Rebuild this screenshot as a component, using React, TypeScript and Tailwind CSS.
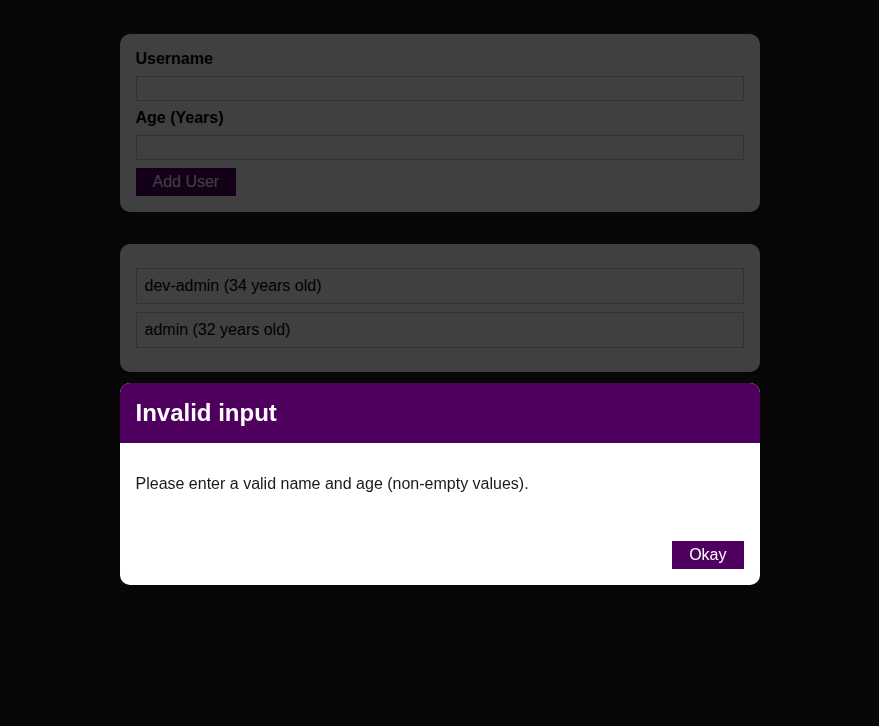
import { useState } from "react";

type User = { id: string; name: string; age: number };

function Card({ children }: { children: React.ReactNode }) {
  return (
    <div className="rounded-[10px] bg-white shadow-[0_2px_8px_rgba(0,0,0,0.26)]">
      {children}
    </div>
  );
}

function ErrorModal({ title, message, onConfirm }: { title: string; message: string; onConfirm: () => void }) {
  return (
    <>
      <div className="fixed inset-0 z-10 bg-black/75" onClick={onConfirm} />
      <div className="absolute left-1/2 top-[383px] z-20 w-[640px] -translate-x-1/2 overflow-hidden rounded-[10px] bg-white">
        <header className="bg-[#4f005f] p-4">
          <h2 className="m-0 text-2xl font-bold leading-[normal] text-white">{title}</h2>
        </header>
        <div className="p-4">
          <p className="my-4 leading-[normal] text-[#1a1a1a]">{message}</p>
        </div>
        <footer className="flex justify-end p-4">
          <button
            onClick={onConfirm}
            className="border border-[#4f005f] bg-[#4f005f] px-4 py-1 leading-[normal] text-white"
          >
            Okay
          </button>
        </footer>
      </div>
    </>
  );
}

export default function App() {
  const [users] = useState<User[]>([
    { id: "u1", name: "dev-admin", age: 34 },
    { id: "u2", name: "admin", age: 32 },
  ]);
  const [error, setError] = useState<{ title: string; message: string } | null>({
    title: "Invalid input",
    message: "Please enter a valid name and age (non-empty values).",
  });

  return (
    <div className="relative min-h-screen bg-[#1f1f1f] pt-[34px] font-['Liberation_Sans',Arial,sans-serif] text-base leading-[normal]">
      {error && <ErrorModal title={error.title} message={error.message} onConfirm={() => setError(null)} />}
      <div className="mx-auto w-[640px]">
        <Card>
          <form className="p-4" onSubmit={(e) => e.preventDefault()}>
            <label htmlFor="username" className="mb-2 block font-bold">
              Username
            </label>
            <input id="username" type="text" className="mb-2 block w-full border border-[#ccc] p-[0.15rem]" />
            <label htmlFor="age" className="mb-2 block font-bold">
              Age (Years)
            </label>
            <input id="age" type="number" className="mb-2 block w-full border border-[#ccc] p-[0.15rem]" />
            <button type="submit" className="border border-[#4f005f] bg-[#4f005f] px-4 py-1 text-white">
              Add User
            </button>
          </form>
        </Card>
        <div className="mt-8">
          <Card>
            <ul className="p-4">
              {users.map((u) => (
                <li key={u.id} className="my-2 border border-[#ccc] p-2">
                  {u.name} ({u.age} years old)
                </li>
              ))}
            </ul>
          </Card>
        </div>
      </div>
    </div>
  );
}
